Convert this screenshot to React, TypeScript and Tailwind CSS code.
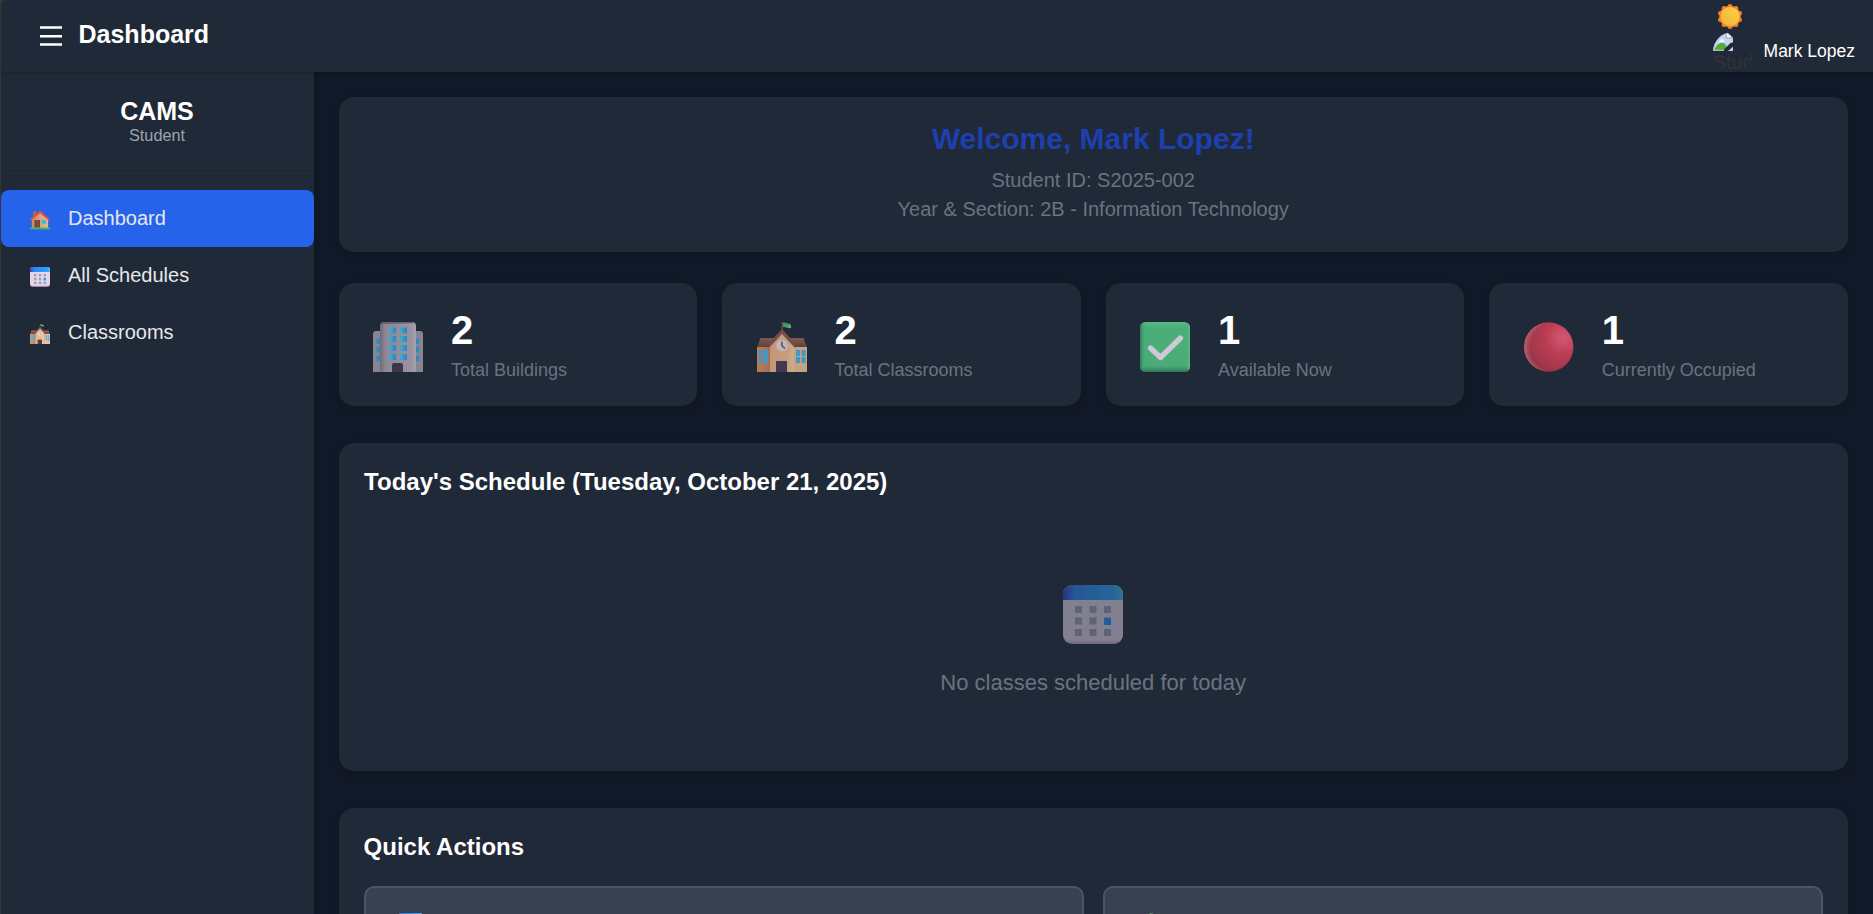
import React from "react";

type IconProps = { className?: string };

function HouseIcon({ className }: IconProps) {
  return (
    <svg viewBox="0 0 32 32" className={className}>
      <defs>
        <linearGradient id="hs-wall" x1="0" x2="1">
          <stop offset="0" stopColor="#c98a66" />
          <stop offset="1" stopColor="#f0b78a" />
        </linearGradient>
      </defs>
      <path d="M5 2h5v11H5z" fill="#a5715c" />
      <path d="M3 14 16 3l13 11v16H3z" fill="url(#hs-wall)" />
      <path d="M7 16h9v13H7z" fill="#74493f" />
      <path d="M11 16h1v13h-1z" fill="#8f5d4e" />
      <path d="M19 16h7v6h-7z" fill="#38b6f1" />
      <path d="M16 .8 0 15.2l1.500 2L16 5l14.500 12.200 1.500-2z" fill="#f04e34" />
      <path d="M0 28h32v3H0z" fill="#43b867" />
    </svg>
  );
}

function CalendarIcon({ className }: IconProps) {
  return (
    <svg viewBox="0 0 60 60" className={className}>
      <defs>
        <linearGradient id="cal-top" x1="0" x2="1">
          <stop offset="0" stopColor="#2f3fc4" />
          <stop offset=".2" stopColor="#2b86f4" />
          <stop offset=".85" stopColor="#2ea2fb" />
          <stop offset="1" stopColor="#45c0e0" />
        </linearGradient>
        <linearGradient id="cal-body" x1="0" y1="0" x2="0" y2="1">
          <stop offset="0" stopColor="#e3d8e9" />
          <stop offset=".93" stopColor="#e1d4e8" />
          <stop offset="1" stopColor="#c49fda" />
        </linearGradient>
      </defs>
      <rect width="60" height="59" rx="9" fill="url(#cal-body)" />
      <path d="M0 15V9a9 9 0 0 1 9-9h42a9 9 0 0 1 9 9v6z" fill="url(#cal-top)" />
      <g fill="#a29cb0">
        <path d="M12 21h7v7h-7zM26.500 21h7v7h-7zM41 21h7v7h-7zM12 32.500h7v7h-7zM26.500 32.500h7v7h-7zM12 44h7v7h-7zM26.500 44h7v7h-7zM41 44h7v7h-7z" />
      </g>
      <path d="M41 32.500h7v7.500h-7z" fill="#2791f4" />
    </svg>
  );
}

function SchoolIcon({ className }: IconProps) {
  return (
    <svg viewBox="0 0 50 50" className={className}>
      <defs>
        <linearGradient id="sc-mid" x1="0" x2="1">
          <stop offset="0" stopColor="#eeb288" />
          <stop offset=".7" stopColor="#eebd91" />
          <stop offset="1" stopColor="#f6d0a3" />
        </linearGradient>
        <linearGradient id="sc-left" x1="0" x2="1">
          <stop offset="0" stopColor="#df965e" />
          <stop offset="1" stopColor="#bd8266" />
        </linearGradient>
        <linearGradient id="sc-roof" x1="0" y1="0" x2="0" y2="1">
          <stop offset="0" stopColor="#9b665c" />
          <stop offset="1" stopColor="#71463f" />
        </linearGradient>
      </defs>
      <path d="M24.500 0h1.500v9h-1.500z" fill="#775048" />
      <path d="M26 .8c3-.8 4 1 7.500 1.200l.5 4c-3 1-4-.8-8-1z" fill="#43b867" />
      <path d="M31 3l3 .5v2.500l-3-.2z" fill="#7dd37c" />
      <path d="M3.500 16h43l3.500 9H0z" fill="url(#sc-roof)" />
      <path d="M0 25h13v25H0z" fill="url(#sc-left)" />
      <path d="M37 25h13v25H37z" fill="#efc294" />
      <path d="M13 24 25 11l12 13v26H13z" fill="url(#sc-mid)" />
      <path d="m25 7-13 14v5l13-14 13 14v-5z" fill="#8b594e" />
      <path d="M2 28h4v6H2zM7 28h4v6H7zM2 35h4v6H2zM7 35h4v6H7zM39 28h4v6h-4zM44.500 28h4v6h-4zM39 35h4v6h-4zM44.500 35h4v6h-4z" fill="#45b5f2" />
      <circle cx="25" cy="23.500" r="5.700" fill="#e6d9e9" />
      <path d="M24.800 19.500v4l3.200 3" fill="none" stroke="#765050" strokeWidth="1.500" />
      <path d="M19 39h11v11H19z" fill="#4b3c59" />
    </svg>
  );
}

function BuildingIcon({ className }: IconProps) {
  return (
    <svg viewBox="0 0 50 50" className={className}>
      <defs>
        <linearGradient id="bd-mid" x1="0" x2="1">
          <stop offset="0" stopColor="#817987" />
          <stop offset=".15" stopColor="#a9a0af" />
          <stop offset=".85" stopColor="#b7adbc" />
          <stop offset="1" stopColor="#c8bec9" />
        </linearGradient>
        <linearGradient id="bd-win" x1="0" x2="1">
          <stop offset="0" stopColor="#55cdee" />
          <stop offset="1" stopColor="#2e9be2" />
        </linearGradient>
      </defs>
      <path d="M0 50V12a3 3 0 0 1 3-3h7v41z" fill="#a49ba8" />
      <path d="M40 9h7a3 3 0 0 1 3 3v38H40z" fill="#a39aaa" />
      <path d="M3.500 16.500H7V22H3.500zM3.500 25H7v5.500H3.500zM3.500 33.500H7V39H3.500zM43 16.500h3V22h-3zM43 25h3v5.500h-3zM43 33.500h3V39h-3z" fill="#35a2e6" />
      <path d="M7 50V4a4 4 0 0 1 4-4h28a4 4 0 0 1 4 4v46z" fill="url(#bd-mid)" />
      <path d="M8.300 1.900A4 4 0 0 1 11 0h28a4 4 0 0 1 2.700 1.200z" fill="#786f80" />
      <g fill="url(#bd-win)">
        <rect x="16" y="5.500" width="7" height="6" />
        <rect x="26.500" y="5.500" width="7.500" height="6" />
        <rect x="16" y="14" width="7" height="6" />
        <rect x="26.500" y="14" width="7.500" height="6" />
        <rect x="16" y="23" width="7" height="6" />
        <rect x="26.500" y="23" width="7.500" height="6" />
        <rect x="16" y="32" width="7" height="6" />
        <rect x="26.500" y="32" width="7.500" height="6" />
      </g>
      <path d="M19 50v-7a2 2 0 0 1 2-2h7a2 2 0 0 1 2 2v7z" fill="#47384f" />
    </svg>
  );
}

function CheckIcon({ className }: IconProps) {
  return (
    <svg viewBox="0 0 50 50" className={className}>
      <defs>
        <linearGradient id="ck-x" x1="0" x2="1">
          <stop offset="0" stopColor="#2d7d59" stopOpacity=".8" />
          <stop offset=".12" stopColor="#58d590" stopOpacity="0" />
          <stop offset=".93" stopColor="#58d590" stopOpacity="0" />
          <stop offset="1" stopColor="#6fe29f" />
        </linearGradient>
        <linearGradient id="ck-y" x1="0" y1="0" x2="0" y2="1">
          <stop offset="0" stopColor="#66dd98" />
          <stop offset=".12" stopColor="#56d08a" />
          <stop offset=".88" stopColor="#56cc89" />
          <stop offset="1" stopColor="#358963" />
        </linearGradient>
      </defs>
      <rect width="50" height="50" rx="5.500" fill="url(#ck-y)" />
      <rect width="50" height="50" rx="5.500" fill="url(#ck-x)" />
      <path d="M10.500 26 20.500 35.500 40.500 16" fill="none" stroke="#fbf0ff" strokeWidth="5.300" strokeLinecap="round" strokeLinejoin="round" />
    </svg>
  );
}

function RedCircleIcon({ className }: IconProps) {
  return (
    <svg viewBox="0 0 50 50" className={className}>
      <defs>
        <radialGradient id="rc-main" cx=".79" cy=".31" r=".8">
          <stop offset="0" stopColor="#fc6384" />
          <stop offset=".16" stopColor="#f45b78" />
          <stop offset=".42" stopColor="#e3445a" />
          <stop offset=".8" stopColor="#c83b52" />
          <stop offset="1" stopColor="#b0384c" />
        </radialGradient>
        <radialGradient id="rc-rim" cx=".64" cy=".5" r=".65">
          <stop offset=".78" stopColor="#f5a0a0" stopOpacity="0" />
          <stop offset="1" stopColor="#f5a0a0" stopOpacity=".6" />
        </radialGradient>
      </defs>
      <circle cx="24.700" cy="25" r="24.700" fill="url(#rc-main)" />
      <circle cx="24.700" cy="25" r="24.700" fill="url(#rc-rim)" />
    </svg>
  );
}

function SunIcon({ className }: IconProps) {
  return (
    <svg viewBox="0 0 24 25" className={className}>
      <defs>
        <linearGradient id="sn-core" x1="1" y1="0" x2="0" y2="1">
          <stop offset="0" stopColor="#ffd83e" />
          <stop offset="1" stopColor="#eeae3c" />
        </linearGradient>
      </defs>
      <g fill="#fa7f2e">
        <circle cx="12" cy="12.500" r="10.800" />
        <circle cx="12" cy="2.300" r="2.300" />
        <circle cx="18" cy="4.300" r="2.300" />
        <circle cx="21.700" cy="9.300" r="2.300" />
        <circle cx="21.700" cy="15.700" r="2.300" />
        <circle cx="18" cy="20.700" r="2.300" />
        <circle cx="12" cy="22.700" r="2.300" />
        <circle cx="6" cy="20.700" r="2.300" />
        <circle cx="2.300" cy="15.700" r="2.300" />
        <circle cx="2.300" cy="9.300" r="2.300" />
        <circle cx="6" cy="4.300" r="2.300" />
      </g>
      <circle cx="12" cy="12.500" r="9.500" fill="url(#sn-core)" />
    </svg>
  );
}

function MissingImageIcon({ className }: IconProps) {
  return (
    <svg viewBox="0 0 20 20" className={className}>
      <path d="M0 0h14l6 6v13H0z" fill="#c3d5f6" />
      <path d="M.7 0v18.400H20" fill="none" stroke="#b4b6ba" strokeWidth="1.400" />
      <path d="M7 8.500c.5-2 3-2 3.500-.3 1 0 1.500 1.500.5 1.900H6.600c-1-.3-.8-1.600.4-1.600z" fill="#f3f7ff" />
      <path d="M1.500 17.700c1.500-4 4-6.700 8-6.700 2.500 0 4 2 5 6.700z" fill="#4fae33" />
      <path d="M13.300 0v6H20z" fill="#fff" stroke="#9b9ea3" strokeWidth="1" />
      <path d="M20 10.500 17.500 11 11 17.500V20h3.500L20 15z" fill="#202937" />
      <path d="M15 19.100 20 14.800v4.300z" fill="#c9cbd0" />
    </svg>
  );
}

const navItems = [
  { label: "Dashboard", Icon: HouseIcon, active: true },
  { label: "All Schedules", Icon: CalendarIcon, active: false },
  { label: "Classrooms", Icon: SchoolIcon, active: false },
];

const stats = [
  { value: "2", label: "Total Buildings", Icon: BuildingIcon },
  { value: "2", label: "Total Classrooms", Icon: SchoolIcon },
  { value: "1", label: "Available Now", Icon: CheckIcon },
  { value: "1", label: "Currently Occupied", Icon: RedCircleIcon },
];

const actions = [
  { id: "schedules", Icon: CalendarIcon },
  { id: "classrooms", Icon: SchoolIcon },
];

function Header() {
  return (
    <header className="z-10 flex h-[72px] shrink-0 justify-between rounded-tl-[5px] bg-[#202937] pl-[39px] pr-[18px] shadow-[0_1px_3px_rgba(0,0,0,0.2)]">
      <div className="flex h-[69px] items-center gap-[16.5px]">
        <svg viewBox="0 0 22 20" className="mt-[3px] h-5 w-[22px]">
          <path d="M0 1.500h22M0 10.200h22M0 18.500h22" stroke="#fff" strokeWidth="2.500" />
        </svg>
        <h1 className="text-[25px] font-bold leading-[29px] text-white">Dashboard</h1>
      </div>
      <div className="flex flex-col">
        <SunIcon className="ml-[5px] mt-[4px] h-[25px] w-6" />
        <div className="mt-[3px] flex h-10 items-center gap-[11px]">
          <div className="h-10 w-10 overflow-hidden rounded-full text-[20px] leading-[20px] text-[#333333]">
            <MissingImageIcon className="h-5 w-5" />
            <div>Stud</div>
          </div>
          <span className="mb-[2px] text-[17.5px] leading-5 text-white">Mark Lopez</span>
        </div>
      </div>
    </header>
  );
}

function Sidebar() {
  return (
    <aside className="z-[5] w-[313px] shrink-0 bg-[#202937] shadow-[1px_0_5px_rgba(0,0,0,0.15)]">
      <div className="flex h-[99px] flex-col items-center border-b border-[#1b2532] pr-px pt-[25px]">
        <div className="text-[25px] font-bold leading-[28px] text-white">CAMS</div>
        <div className="text-[16.25px] leading-5 text-[#9ca3af]">Student</div>
      </div>
      <nav className="pt-[19px]">
        {navItems.map(({ label, Icon, active }) => (
          <a
            key={label}
            className={
              active
                ? "flex h-[57px] items-center gap-[18px] rounded-lg bg-[#2563eb] pl-[29px]"
                : "flex h-[57px] items-center gap-[18px] rounded-lg pl-[29px]"
            }
          >
            <Icon className="mt-[3px] h-5 w-5" />
            <span className="mb-[2px] text-[20px] leading-6 text-[#e5e7eb]">{label}</span>
          </a>
        ))}
      </nav>
    </aside>
  );
}

export default function App() {
  return (
    <div className="h-[914px] overflow-hidden bg-[#3a3735] pl-px font-['Liberation_Sans',Arial,sans-serif]">
      <div className="flex h-full flex-col">
        <Header />
        <div className="flex min-h-0 flex-1">
          <Sidebar />
          <main className="flex min-w-0 flex-1 flex-col overflow-hidden bg-[#111827] py-[25px] pl-[24.6px] pr-[25.2px]">
            <section className="h-[155px] shrink-0 rounded-[15px] bg-[#202937] pt-[25px] text-center shadow-[0_2px_6px_rgba(0,0,0,0.1)]">
              <h2 className="text-[30px] font-bold leading-[34px] text-[#1e40af]">Welcome, Mark Lopez!</h2>
              <p className="mt-[10px] text-[20px] leading-[29px] text-[#6b7280]">Student ID: S2025-002</p>
              <p className="text-[20px] leading-[29px] text-[#6b7280]">Year &amp; Section: 2B - Information Technology</p>
            </section>

            <section className="mt-[31px] grid shrink-0 grid-cols-4 gap-[25px]">
              {stats.map(({ value, label, Icon }) => (
                <div
                  key={label}
                  className="flex h-[123px] gap-[28px] rounded-[15px] bg-[#202937] pl-[34.4px] shadow-[0_2px_6px_rgba(0,0,0,0.1)]"
                >
                  <Icon className="mt-[39px] size-[50px] opacity-80" />
                  <div className="pt-6">
                    <div className="text-[40px] font-bold leading-[46px] text-white">{value}</div>
                    <div className="mt-[7px] text-[18px] leading-5 text-[#6b7280]">{label}</div>
                  </div>
                </div>
              ))}
            </section>

            <section className="mt-[37px] h-[328px] shrink-0 rounded-[15px] bg-[#202937] px-[25px] pt-[25px] shadow-[0_2px_6px_rgba(0,0,0,0.1)]">
              <h3 className="pl-[0.5px] text-[24px] font-bold leading-[28px] text-white">Today's Schedule (Tuesday, October 21, 2025)</h3>
              <div className="flex flex-col items-center pt-[89px]">
                <CalendarIcon className="size-[60px] opacity-50" />
                <p className="mt-[25px] text-[22px] leading-[26px] text-[#6b7280]">No classes scheduled for today</p>
              </div>
            </section>

            <section className="mt-[37px] h-[240px] shrink-0 rounded-[15px] bg-[#202937] px-[25px] pt-[25px] shadow-[0_2px_6px_rgba(0,0,0,0.1)]">
              <h3 className="text-[24px] font-bold leading-[28px] text-white">Quick Actions</h3>
              <div className="mt-[25px] grid grid-cols-2 gap-[19px]">
                {actions.map(({ id, Icon }) => (
                  <div
                    key={id}
                    className="h-[100px] rounded-[10px] border-2 border-[#4b5563] bg-[#394150] pl-[32px] pt-[25px]"
                  >
                    <Icon className="size-[25px]" />
                  </div>
                ))}
              </div>
            </section>
          </main>
        </div>
      </div>
    </div>
  );
}
